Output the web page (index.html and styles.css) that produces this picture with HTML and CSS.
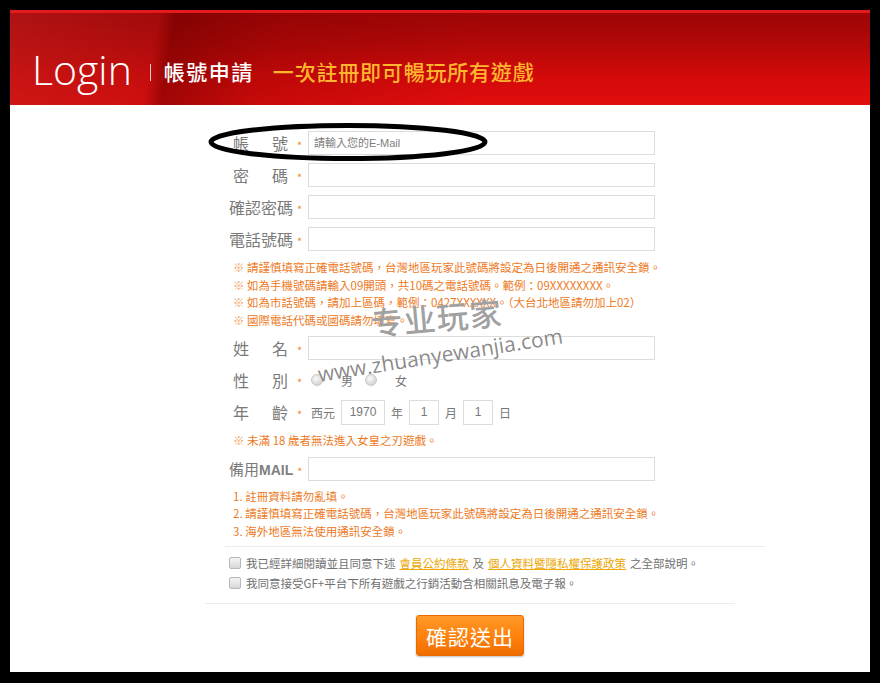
FILE: index.html
```html
<!DOCTYPE html>
<html lang="zh-Hant">
<head>
<meta charset="utf-8">
<title>Login | 帳號申請</title>
<link rel="stylesheet" href="styles.css">
</head>
<body>
<div class="frame">
  <div class="page">
    <header class="hd">
      <span class="login">Login</span>
      <span class="sep"></span>
      <span class="apply">帳號申請</span>
      <span class="tag">一次註冊即可暢玩所有遊戲</span>
    </header>

    <main class="form">
      <div class="row">
        <div class="lab"><span class="t two">帳號</span><span class="req">*</span></div>
        <input class="field" type="text" placeholder="請輸入您的E-Mail">
      </div>
      <div class="row">
        <div class="lab"><span class="t two">密碼</span><span class="req">*</span></div>
        <input class="field" type="password">
      </div>
      <div class="row">
        <div class="lab"><span class="t">確認密碼</span><span class="req">*</span></div>
        <input class="field" type="password">
      </div>
      <div class="row">
        <div class="lab"><span class="t">電話號碼</span><span class="req">*</span></div>
        <input class="field" type="text">
      </div>

      <div class="notes n1">
        <p><span class="mk">※</span> 請謹慎填寫正確電話號碼，台灣地區玩家此號碼將設定為日後開通之通訊安全鎖。</p>
        <p><span class="mk">※</span> 如為手機號碼請輸入09開頭，共10碼之電話號碼。範例：09XXXXXXXX。</p>
        <p><span class="mk">※</span> 如為市話號碼，請加上區碼，範例：0427XXXXXX。（大台北地區請勿加上02）</p>
        <p><span class="mk">※</span> 國際電話代碼或國碼請勿填寫。</p>
      </div>

      <div class="row">
        <div class="lab"><span class="t two">姓名</span><span class="req">*</span></div>
        <input class="field" type="text">
      </div>
      <div class="row">
        <div class="lab"><span class="t two">性別</span><span class="req">*</span></div>
        <div class="radios">
          <span class="radio"></span><span class="rt">男</span>
          <span class="radio"></span><span class="rt">女</span>
        </div>
      </div>
      <div class="row">
        <div class="lab"><span class="t two">年齡</span><span class="req">*</span></div>
        <div class="age">
          <span class="at">西元</span>
          <span class="box yr">1970</span>
          <span class="at">年</span>
          <span class="box">1</span>
          <span class="at">月</span>
          <span class="box">1</span>
          <span class="at">日</span>
        </div>
      </div>

      <div class="notes n2">
        <p><span class="mk">※</span> 未滿 18 歲者無法進入女皇之刃遊戲。</p>
      </div>

      <div class="row">
        <div class="lab"><span class="t mail">備用<span class="latin">MAIL</span></span><span class="req">*</span></div>
        <input class="field" type="text">
      </div>

      <div class="notes n3">
        <p>1. 註冊資料請勿亂填。</p>
        <p>2. 請謹慎填寫正確電話號碼，台灣地區玩家此號碼將設定為日後開通之通訊安全鎖。</p>
        <p>3. 海外地區無法使用通訊安全鎖。</p>
      </div>

      <div class="rule r1"></div>

      <div class="checks">
        <p><span class="cb"></span>我已經詳細閱讀並且同意下述 <a class="lk">會員公約條款</a> 及 <a class="lk">個人資料暨隱私權保護政策</a> 之全部說明。</p>
        <p><span class="cb"></span>我同意接受GF+平台下所有遊戲之行銷活動含相關訊息及電子報。</p>
      </div>

      <div class="rule r2"></div>

      <div class="actions">
        <button class="submit" type="button">確認送出</button>
      </div>
    </main>

    <div class="wm wm-cn">专业玩家</div>
    <div class="wm wm-url">www.zhuanyewanjia.com</div>

    <svg class="ring" width="860" height="662" viewBox="0 0 860 662" aria-hidden="true">
      <ellipse cx="338" cy="132" rx="137" ry="16.5" fill="none" stroke="#000" stroke-width="5"/>
    </svg>
  </div>
</div>
</body>
</html>
```

FILE: styles.css
```css
html, body {
  margin: 0;
  padding: 0;
  background: #000;
}

.frame {
  width: 880px;
  height: 683px;
  box-sizing: border-box;
  padding: 10px 10px 11px 10px;
  background: #000;
}

.page {
  position: relative;
  width: 860px;
  height: 662px;
  background: #fff;
  overflow: hidden;
  font-family: "Noto Sans CJK TC", "Noto Sans", sans-serif;
}

/* ---------- header ---------- */
.hd {
  height: 95px;
  box-sizing: border-box;
  display: flex;
  align-items: center;
  padding: 20px 0 0 22px;
  border-top: 3px solid #e51a1a;
  background:
    linear-gradient(100deg, rgba(190, 30, 30, 0.55) 0, rgba(170, 20, 20, 0.35) 17%, rgba(110, 0, 0, 0.55) 19%, rgba(120, 0, 0, 0.25) 30%, rgba(0, 0, 0, 0) 55%),
    linear-gradient(180deg, #9d0505 0%, #b40808 35%, #d40a0a 70%, #e20d0d 100%);
}

.login {
  font-family: "Open Sans", "Liberation Sans", sans-serif;
  font-weight: 300;
  font-size: 41px;
  line-height: 1;
  color: #fff;
  letter-spacing: 0;
}

.sep {
  width: 1px;
  height: 17px;
  background: #f1c6c6;
  margin: 6px 13px 0 18px;
}

.apply {
  font-size: 21px;
  font-weight: 500;
  color: #fff;
  margin-top: 4px;
  letter-spacing: 1.5px;
}

.tag {
  font-size: 21px;
  font-weight: 500;
  color: #ffb62e;
  margin: 4px 0 0 19px;
  letter-spacing: 0.8px;
}

/* ---------- form ---------- */
.form {
  width: 530px;
  margin-left: 195px;
  padding-top: 22px;
  box-sizing: border-box;
}

.row {
  display: flex;
  align-items: center;
  height: 32px;
  padding-left: 24px;
}

.lab {
  width: 79px;
  flex: none;
  display: flex;
  align-items: center;
}

.t {
  width: 64px;
  font-size: 16px;
  color: #7a7a7a;
  white-space: nowrap;
  box-sizing: border-box;
}

.t.two {
  padding: 0 5px 0 4px;
  text-align: justify;
  text-align-last: justify;
}

.t.mail {
  width: auto;
  font-size: 15px;
}

.latin {
  font-family: "Liberation Sans", sans-serif;
  font-weight: 700;
  font-size: 14px;
  color: #808080;
}

.req {
  font-size: 11px;
  color: #f28a2e;
  margin: 5px 0 0 4px;
  line-height: 1;
}

.field {
  width: 347px;
  height: 24px;
  box-sizing: border-box;
  border: 1px solid #dcdcdc;
  background: #fff;
  padding: 0 5px;
  font-family: "Liberation Sans", "Noto Sans CJK TC", sans-serif;
  font-size: 11px;
  color: #555;
  outline: none;
}

.field::placeholder {
  color: #7d7d7d;
}

/* radios */
.radios {
  display: flex;
  align-items: center;
  padding-left: 3px;
}

.radio {
  width: 10px;
  height: 10px;
  border-radius: 50%;
  border: 1px solid #c8c8c8;
  background: radial-gradient(circle at 40% 35%, #fafafa 0, #d5d5d5 70%, #bdbdbd 100%);
  margin-right: 18px;
}

.rt {
  font-size: 12px;
  color: #777;
  margin-right: 12px;
}

/* age */
.age {
  display: flex;
  align-items: center;
  padding-left: 3px;
}

.at {
  font-size: 12px;
  color: #777;
  margin-right: 6px;
}

.box {
  width: 30px;
  height: 25px;
  box-sizing: border-box;
  border: 1px solid #dcdcdc;
  display: flex;
  align-items: center;
  justify-content: center;
  font-family: "Liberation Sans", sans-serif;
  font-size: 12px;
  color: #777;
  margin-right: 6px;
}

.box.yr {
  width: 44px;
}

/* notes */
.notes {
  padding-left: 28px;
}

.notes p {
  margin: 0;
  font-size: 11.5px;
  line-height: 17.5px;
  color: #ee7a1e;
  white-space: nowrap;
}

.notes .mk {
  color: #f3a060;
}

.n1 {
  margin: 4px 0 3px;
}

.n2 {
  margin: 4px 0 3px;
}

.n3 {
  margin: 3px 0 0;
  padding-left: 28px;
}

/* rules */
.rule {
  height: 1px;
  background: #ececec;
}

.r1 {
  margin: 6px 0 0 20px;
  width: 540px;
}

.r2 {
  margin: 10px 0 0 0;
}

/* checks */
.checks {
  padding-left: 24px;
  margin-top: 6px;
}

.checks p {
  margin: 0;
  display: flex;
  align-items: center;
  height: 20px;
  font-size: 11.5px;
  color: #707070;
  white-space: nowrap;
}

.cb {
  width: 10px;
  height: 10px;
  border: 1px solid #b8b8b8;
  border-radius: 2px;
  background: linear-gradient(180deg, #f4f4f4, #d8d8d8);
  margin-right: 5px;
  flex: none;
}

.lk {
  color: #eba600;
  text-decoration: underline;
  margin: 0 4px;
}

/* button */
.actions {
  display: flex;
  justify-content: center;
  padding-top: 11px;
}

.submit {
  width: 108px;
  height: 41px;
  border: 1px solid #e86a00;
  border-radius: 3px;
  background: linear-gradient(180deg, #ff9a2a 0%, #ff8510 45%, #f06d00 100%);
  box-shadow: 0 1px 2px rgba(0, 0, 0, 0.25);
  color: #fff;
  font-family: "Noto Sans CJK TC", sans-serif;
  font-size: 21px;
  letter-spacing: 1px;
  padding: 0;
  cursor: pointer;
}

/* watermark overlay */
.wm {
  position: absolute;
  pointer-events: none;
  white-space: nowrap;
}

.wm-cn {
  left: 362px;
  top: 296px;
  font-family: "Noto Sans CJK SC", sans-serif;
  font-size: 32px;
  font-weight: 500;
  line-height: 1;
  color: rgba(125, 125, 125, 0.72);
  letter-spacing: 1px;
  transform: rotate(-5deg);
  transform-origin: left bottom;
  text-shadow: 0 0 1px #fff;
}

.wm-url {
  left: 308px;
  top: 354px;
  font-family: "Open Sans", "Liberation Sans", sans-serif;
  font-size: 21px;
  line-height: 1;
  color: rgba(105, 105, 105, 0.78);
  transform: rotate(-9deg);
  transform-origin: left center;
  text-shadow: 0 0 1px #fff;
}

.ring {
  position: absolute;
  left: 0;
  top: 0;
  pointer-events: none;
}
```
